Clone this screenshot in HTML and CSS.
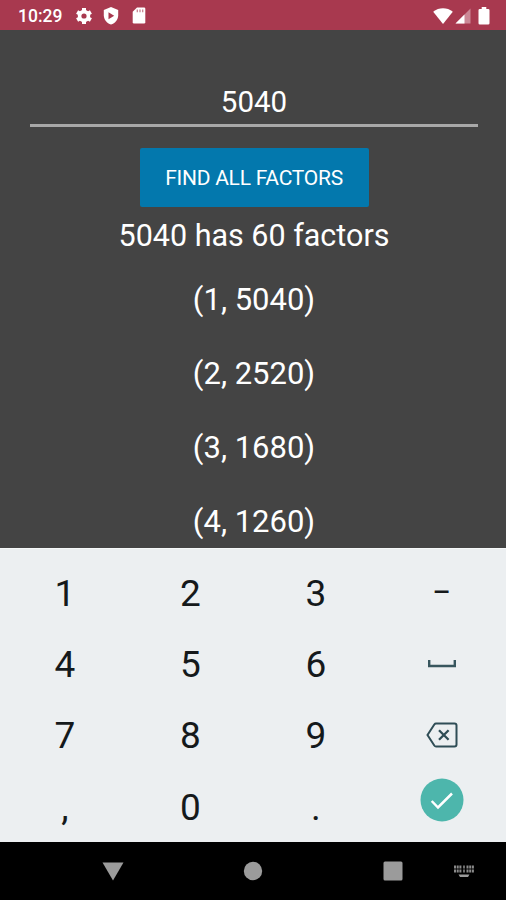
FILE: index.html
```
<!DOCTYPE html>
<html lang="en">
<head>
    <meta charset="UTF-8">
    <meta name="viewport" content="width=device-width, initial-scale=1.0">
    <title>Factors</title>
    <link rel="stylesheet" href="styles.css">
</head>
<body>
    <div class="status-bar">
        <span class="clock">10:29</span>
        <svg class="gear" width="18" height="18" viewBox="0 0 18 18">
            <g stroke="#fff" stroke-width="4">
                <path d="M9 1v16M2.1 5l13.8 8M15.9 5L2.1 13"/>
            </g>
            <circle cx="9" cy="9" r="4.4" fill="none" stroke="#fff" stroke-width="3.6"/>
            <circle cx="9" cy="9" r="2.6" fill="#a8394f"/>
        </svg>
        <svg class="shield" width="16" height="18" viewBox="0 0 16 18">
            <path d="M8 0l7.2 3v5.2c0 4.3-3 8.2-7.2 9.4C3.8 16.4.8 12.5.8 8.2V3z" fill="#fff"/>
            <path d="M5.5 5.3v7l5.7-3.5z" fill="#a8394f"/>
        </svg>
        <svg class="sd-card" width="14" height="17" viewBox="0 0 14 17">
            <path d="M5 .5h7q1.3 0 1.3 1.3v13.4q0 1.3-1.3 1.3H2Q.7 16.5.7 15.2V4.8z" fill="#fff"/>
            <path d="M5.3 2.5v2.7M8 2.5v2.7M10.7 2.5v2.7" stroke="#c98391" stroke-width="1.3"/>
        </svg>
        <div class="status-right">
            <svg width="20" height="16" viewBox="0 0 20 16">
                <path d="M10 16L.2 3.8C6-.8 14-.8 19.8 3.8z" fill="#fff"/>
            </svg>
            <svg class="signal" width="16" height="16" viewBox="0 0 16 16">
                <path d="M15.5.5v15H.5z" fill="#cb8896"/>
                <path d="M9.5 6.5v9h-9z" fill="#fff"/>
            </svg>
            <svg class="battery" width="12" height="18" viewBox="0 0 12 18">
                <path d="M3.7 0h4.6v2h1.9q1.3 0 1.3 1.3v12.9q0 1.3-1.3 1.3H1.8Q.5 17.5.5 16.2V3.3Q.5 2 1.8 2h1.9z" fill="#fff"/>
            </svg>
        </div>
    </div>

    <div class="content">
        <input type="text" class="number-input" value="5040">
        <button class="find-btn">FIND ALL FACTORS</button>
        <div class="summary">5040 has 60 factors</div>
        <div class="factor-list">
            <div class="factor">(1, 5040)</div>
            <div class="factor">(2, 2520)</div>
            <div class="factor">(3, 1680)</div>
            <div class="factor">(4, 1260)</div>
        </div>
    </div>

    <div class="keypad">
        <div class="key">1</div>
        <div class="key">2</div>
        <div class="key">3</div>
        <div class="key minus">−</div>
        <div class="key">4</div>
        <div class="key">5</div>
        <div class="key">6</div>
        <div class="key space">
            <svg width="28" height="8" viewBox="0 0 28 8">
                <path d="M1.2 0v6h25.6V0" fill="none" stroke="#38565e" stroke-width="2.4"/>
            </svg>
        </div>
        <div class="key">7</div>
        <div class="key">8</div>
        <div class="key">9</div>
        <div class="key delete">
            <svg width="32" height="26" viewBox="0 0 32 26">
                <path d="M10 1.5h18.5q2 0 2 2v19q0 2-2 2H10q-1 0-1.7-1L1.5 13l6.8-10.5q.7-1 1.7-1z" fill="none" stroke="#2f4d56" stroke-width="2"/>
                <path d="M13 8.2l9.6 9.6M22.6 8.2L13 17.8" stroke="#2f4d56" stroke-width="2.3"/>
            </svg>
        </div>
        <div class="key">,</div>
        <div class="key">0</div>
        <div class="key">.</div>
        <div class="key enter">
            <svg width="44" height="44" viewBox="0 0 44 44">
                <circle cx="22" cy="22" r="21.5" fill="#4db6ac"/>
                <path d="M11.7 23l6.3 6.5L32 15.5" fill="none" stroke="#fff" stroke-width="2.5"/>
            </svg>
        </div>
    </div>

    <div class="nav-bar">
        <svg class="back" width="22" height="20" viewBox="0 0 22 20">
            <path d="M.5 1.5h21L11 19.5z" fill="#9b9b9b"/>
        </svg>
        <svg class="home" width="20" height="20" viewBox="0 0 20 20">
            <circle cx="10" cy="10" r="9.2" fill="#9b9b9b"/>
        </svg>
        <svg class="recent" width="20" height="20" viewBox="0 0 20 20">
            <rect x=".5" y=".5" width="19" height="19" rx="1.5" fill="#9b9b9b"/>
        </svg>
        <svg class="ime" width="20" height="13" viewBox="0 0 20 13">
            <path d="M0 2h7.5M0 6h7.5M12.5 2H20M12.5 6H20" stroke="#8a8a8a" stroke-width="2.8" stroke-dasharray="2 .7"/>
            <path d="M10 .6v6.800" stroke="#8a8a8a" stroke-width="1.6" stroke-dasharray="2.8 1.2"/>
            <path d="M4.5 9.500h11l-1.500 2.500H6z" fill="#9b9b9b"/>
        </svg>
    </div>
</body>
</html>
```

FILE: styles.css
```
* {
    box-sizing: border-box;
}

body {
    margin: 0;
    height: 900px;
    display: flex;
    flex-direction: column;
    overflow: hidden;
    background-color: #444;
    color: #fff;
    font-family: Roboto, "Liberation Sans", sans-serif;
}

svg {
    display: block;
    flex: none;
}

.status-bar {
    display: flex;
    align-items: center;
    height: 30px;
    padding: 1px 16px 0 18px;
    background-color: #a8394f;
}

.clock {
    width: 57px;
    font-size: 17.5px;
    font-weight: 500;
}

.shield {
    margin-left: 10px;
}

.sd-card {
    margin-left: 13px;
}

.status-right {
    display: flex;
    align-items: center;
    margin-left: auto;
}

.signal {
    margin-left: 2px;
}

.battery {
    margin-left: 7px;
}

.content {
    height: 518px;
    padding: 49px 28px 0 30px;
    overflow: hidden;
    text-align: center;
}

.number-input {
    display: block;
    width: 448px;
    height: 48px;
    padding: 0;
    border: none;
    border-bottom: 3px solid #a8a8a8;
    outline: none;
    background: none;
    color: #fff;
    font-family: inherit;
    font-size: 29.5px;
    text-align: center;
}

.find-btn {
    display: block;
    width: 229px;
    height: 59px;
    margin: 21px auto 0;
    padding: 0;
    border: none;
    border-radius: 2px;
    background-color: #0378ad;
    color: #fff;
    font-family: inherit;
    font-size: 21px;
    letter-spacing: -0.25px;
}

.summary {
    margin-top: 11px;
    font-size: 30.5px;
    line-height: 36px;
}

.factor-list {
    margin-top: 9px;
    font-size: 31px;
}

.factor {
    height: 74px;
    line-height: 74px;
}

.keypad {
    display: grid;
    grid-template-columns: repeat(4, 125.6px);
    grid-template-rows: repeat(4, 71.3px);
    height: 294px;
    padding: 8.5px 0 0 2px;
    border-top: 1px solid #f6f8f9;
    background-color: #eceff1;
    color: #15191b;
}

.key {
    display: flex;
    justify-content: center;
    align-items: center;
    font-size: 37px;
}

.minus {
    padding-bottom: 2px;
    font-size: 34px;
}

.space {
    padding-bottom: 1px;
}

.delete {
    padding-bottom: 1px;
}

.enter {
    padding-bottom: 15px;
}

.nav-bar {
    display: flex;
    align-items: center;
    height: 58px;
    padding-left: 102px;
    background-color: #000;
}

.home {
    margin-left: 119px;
}

.recent {
    margin-left: 120px;
}

.ime {
    margin-left: 51px;
}
```
